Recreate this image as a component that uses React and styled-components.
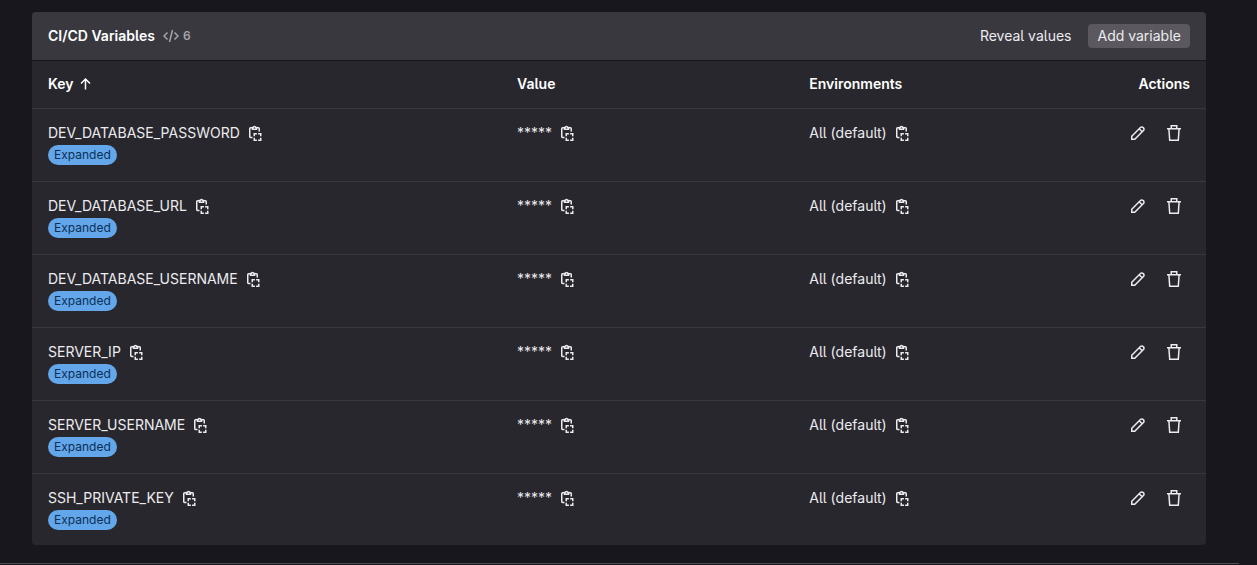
import React from "react";
import styled, { createGlobalStyle } from "styled-components";

const GlobalStyle = createGlobalStyle`
  *, *::before, *::after { box-sizing: border-box; }
  body {
    margin: 0;
    background: #18171d;
    color: #ececef;
    font-family: Inter, "Noto Sans", sans-serif;
    font-size: 14px;
    line-height: 20px;
    font-feature-settings: "cv05";
  }
`;

const Page = styled.main`
  padding: 12px 51px 0 32px;
`;

const Panel = styled.section`
  background: #28272d;
  border-radius: 4px;
  overflow: hidden;
`;

const PanelHeader = styled.header`
  display: flex;
  align-items: center;
  justify-content: space-between;
  height: 49px;
  padding: 0 16px;
  background: #3a383f;
  border-bottom: 1px solid #18171d;
`;

const TitleGroup = styled.div`
  display: flex;
  align-items: center;
  gap: 8px;
`;

const Title = styled.h2`
  margin: 0;
  font-size: 14px;
  font-weight: 600;
  line-height: 20px;
  color: #fff;
`;

const Count = styled.span`
  display: inline-flex;
  align-items: center;
  gap: 4px;
  font-size: 12px;
  font-weight: 600;
  line-height: 16px;
  color: #a4a3a8;
`;

const HeaderActions = styled.div`
  display: flex;
  gap: 8px;
`;

const TextButton = styled.button`
  height: 24px;
  padding: 0 9px;
  border: 0;
  border-radius: 4px;
  background: ${(p) => (p.$filled ? "#5b595f" : "transparent")};
  color: #ececef;
  font: inherit;
  font-feature-settings: inherit;
  cursor: pointer;
`;

const IconButton = styled.button`
  display: inline-flex;
  align-items: center;
  justify-content: center;
  width: 24px;
  height: 24px;
  padding: 0;
  border: 0;
  background: none;
  color: #ececef;
  cursor: pointer;
`;

const Table = styled.table`
  width: 100%;
  table-layout: fixed;
  border-collapse: separate;
  border-spacing: 0;
`;

const HeadCell = styled.th`
  width: ${(p) => p.$width || "auto"};
  height: 48px;
  padding: 13px 16px 14px;
  border-bottom: 1px solid #3a383f;
  color: #fff;
  font-weight: 600;
  vertical-align: top;
  text-align: ${(p) => p.$align || "left"};
`;

const SortButton = styled.button`
  display: flex;
  align-items: center;
  gap: 4px;
  padding: 0;
  border: 0;
  background: none;
  color: inherit;
  font: inherit;
  cursor: pointer;
`;

const Row = styled.tr`
  &:last-child > td { border-bottom: 0; padding-bottom: 15px; }
`;

const Cell = styled.td`
  padding: 12px 16px 16px;
  border-bottom: 1px solid #3a383f;
  vertical-align: top;
`;

const CopyLine = styled.div`
  display: flex;
  align-items: center;
  gap: 4px;
  height: 24px;
`;

const RowActions = styled.div`
  display: flex;
  justify-content: flex-end;
  gap: 12px;
  height: 24px;
  padding-right: 4px;
`;

const Badge = styled.span`
  display: block;
  width: fit-content;
  padding: 2px 6px;
  border-radius: 10px;
  background: #63a6e9;
  color: #0b2f57;
  font-size: 12px;
  line-height: 16px;
`;

const Icon = ({ children }) => (
  <svg
    width={16}
    height={16}
    viewBox="0 0 16 16"
    fill="none"
    stroke="currentColor"
    strokeWidth={1.5}
    aria-hidden="true"
  >
    {children}
  </svg>
);

const CopyIcon = () => (
  <Icon>
    <path d="M4.5 2.75H2.5a.75.75 0 0 0-.75.75v8.25a.75.75 0 0 0 .75.75H4.500M8.500 2.750h2a.75.75 0 0 1 .75.75v3" />
    <path d="M4.500 4.250V2.500h.7a1.350 1.350 0 0 1 2.600 0h.7v1.750z" />
    <path d="M8.900 8.750H6.250v2.600M6.250 12.650v2.600h2.650M10.100 15.250h2.650v-2.600M12.750 11.350V8.750H10.100" />
  </Icon>
);

const PencilIcon = () => (
  <Icon>
    <path d="M1.750 14.250v-3l8.700-8.700a1.900 1.900 0 0 1 2.700 0l.3.3a1.900 1.900 0 0 1 0 2.700L4.750 14.250zM9.200 3.800l3 3" />
  </Icon>
);

const TrashIcon = () => (
  <Icon>
    <path d="M1 3.750h14M5.250 3.500V.75h5.500V3.500M2.900 4l.8 11.250h8.600L13.100 4" />
  </Icon>
);

const CodeIcon = () => (
  <Icon>
    <path d="M4.500 4.500 1 8l3.500 3.500M11.500 4.500 15 8l-3.500 3.500M9.500 2l-3 12" />
  </Icon>
);

const ArrowUpIcon = () => (
  <Icon>
    <path d="M7.500 13.500V3M3 7.500 7.500 3 12 7.500" />
  </Icon>
);

const variables = [
  "DEV_DATABASE_PASSWORD",
  "DEV_DATABASE_URL",
  "DEV_DATABASE_USERNAME",
  "SERVER_IP",
  "SERVER_USERNAME",
  "SSH_PRIVATE_KEY",
].map((name) => ({ name, value: "*****", environment: "All (default)" }));

const Copyable = ({ text, label }) => (
  <CopyLine>
    <span>{text}</span>
    <IconButton type="button" aria-label={label}>
      <CopyIcon />
    </IconButton>
  </CopyLine>
);

const Divider = styled.hr`
  height: 1px;
  margin: 18px 18px 0 0;
  border: 0;
  background: #4c4b51;
`;

export default function App() {
  return (
    <>
      <GlobalStyle />
      <Page>
        <Panel aria-labelledby="variables-title">
          <PanelHeader>
            <TitleGroup>
              <Title id="variables-title">CI/CD Variables</Title>
              <Count>
                <CodeIcon />
                {variables.length}
              </Count>
            </TitleGroup>
            <HeaderActions>
              <TextButton type="button">Reveal values</TextButton>
              <TextButton type="button" $filled>Add variable</TextButton>
            </HeaderActions>
          </PanelHeader>
          <Table>
            <thead>
              <tr>
                <HeadCell $width="39.95%" scope="col" aria-sort="ascending">
                  <SortButton type="button">
                    Key
                    <ArrowUpIcon />
                  </SortButton>
                </HeadCell>
                <HeadCell $width="24.9%" scope="col">Value</HeadCell>
                <HeadCell $width="24.9%" scope="col">Environments</HeadCell>
                <HeadCell scope="col" $align="right">Actions</HeadCell>
              </tr>
            </thead>
            <tbody>
              {variables.map((v) => (
                <Row key={v.name}>
                  <Cell>
                    <Copyable text={v.name} label="Copy key" />
                    <Badge>Expanded</Badge>
                  </Cell>
                  <Cell><Copyable text={v.value} label="Copy value" /></Cell>
                  <Cell><Copyable text={v.environment} label="Copy environment" /></Cell>
                  <Cell>
                    <RowActions>
                      <IconButton type="button" aria-label="Edit"><PencilIcon /></IconButton>
                      <IconButton type="button" aria-label="Delete"><TrashIcon /></IconButton>
                    </RowActions>
                  </Cell>
                </Row>
              ))}
            </tbody>
          </Table>
        </Panel>
      </Page>
      <Divider />
    </>
  );
}
